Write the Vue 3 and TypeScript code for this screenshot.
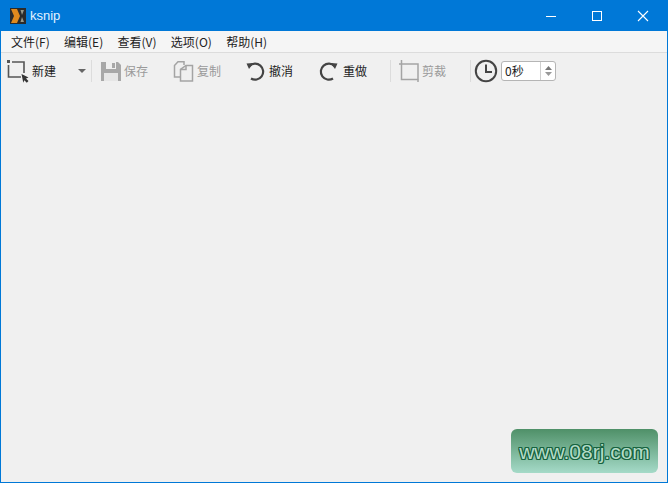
<script setup lang="ts">
const menus: string[] = ['文件(F)', '编辑(E)', '查看(V)', '选项(O)', '帮助(H)']
</script>

<template>
  <div class="window">
    <header class="titlebar">
      <svg class="logo" width="16" height="16" viewBox="0 0 16 16">
        <rect width="16" height="16" fill="#2b2b2b" />
        <path d="M1 1h6l3 7-3 7H1l3-7z" fill="#e08a1e" />
        <path d="M10.500 2h3.500l-2 5zM10.500 14h3.500l-2-5z" fill="#9a9a8a" />
      </svg>
      <span class="title">ksnip</span>
      <div class="controls">
        <svg class="ctl" viewBox="0 0 46 30"><path d="M18 15.500h10" stroke="#fff" stroke-width="1" /></svg>
        <svg class="ctl" viewBox="0 0 46 30"><rect x="18.500" y="10.500" width="9" height="9" fill="none" stroke="#fff" /></svg>
        <svg class="ctl" viewBox="0 0 46 30"><path d="M18 10l10 10M28 10L18 20" stroke="#fff" stroke-width="1.100" /></svg>
      </div>
    </header>

    <nav class="menubar">
      <span v-for="m in menus" :key="m" class="menu">{{ m }}</span>
    </nav>

    <div class="toolbar">
      <div class="tool new">
        <svg width="24" height="24" viewBox="0 0 24 24">
          <path d="M2.500 6V18H15M6 3H18V14" fill="none" stroke="#555" stroke-width="1.600" />
          <path d="M1 1h3v3H1z" fill="#555" />
          <path d="M15.500 15l7 3.500-2.500 1 2.500 2.500-1.700 1.700-2.500-2.500-1 2.500z" fill="#333" />
        </svg>
        <span class="label dark">新建</span>
        <svg class="caret" width="8" height="4" viewBox="0 0 8 4"><path d="M0 0h8L4 4z" fill="#666" /></svg>
      </div>
      <i class="sep first" />
      <div class="tool save">
        <svg width="22" height="22" viewBox="0 0 22 22">
          <path d="M1 2h17l3 3v16H1z" fill="#a8a8a8" />
          <path d="M6 2h10v7H6z" fill="#f0f0f0" />
          <path d="M12 3h3v5h-3z" fill="#a8a8a8" />
          <path d="M4 13h14v8H4z" fill="#e6e6e6" />
        </svg>
        <span class="label">保存</span>
      </div>
      <div class="tool copy">
        <svg width="22" height="22" viewBox="0 0 22 22" fill="none" stroke="#a4a4a4" stroke-width="1.500">
          <path d="M11 5V1.800H5L1.500 5.500V17H7" />
          <path d="M13 5.500H19.500V21H7.500V9.500z" fill="#f0f0f0" />
          <path d="M7.500 9.500H13V5.500" />
        </svg>
        <span class="label">复制</span>
      </div>
      <div class="tool undo">
        <svg width="22" height="22" viewBox="0 0 22 22" fill="none">
          <path d="M4.500 6A8 8 0 1 1 6 18.500" stroke="#444" stroke-width="2.200" />
          <path d="M1.500 3.500L8.500 3 4 9z" fill="#444" />
        </svg>
        <span class="label dark">撤消</span>
      </div>
      <div class="tool redo">
        <svg width="22" height="22" viewBox="0 0 22 22" fill="none">
          <path d="M17.500 6A8 8 0 1 0 16 18.500" stroke="#444" stroke-width="2.200" />
          <path d="M20.500 3.500L13.500 3 18 9z" fill="#444" />
        </svg>
        <span class="label dark">重做</span>
      </div>
      <i class="sep second" />
      <div class="tool crop">
        <svg width="22" height="24" viewBox="0 0 22 24" fill="none" stroke="#a4a4a4" stroke-width="1.500">
          <path d="M3.500 1V20.500H20V5H1" />
          <path d="M20 20.500V23" />
        </svg>
        <span class="label">剪裁</span>
      </div>
      <i class="sep third" />
      <svg class="clock" width="24" height="24" viewBox="0 0 24 24" fill="none" stroke="#444">
        <circle cx="12" cy="12" r="10.200" stroke-width="2" />
        <path d="M12 5.500V13H18" stroke-width="2" />
      </svg>
      <div class="spin">
        <span class="value">0秒</span>
        <span class="arrows">
          <svg width="7" height="4" viewBox="0 0 7 4"><path d="M0 4L3.500 0 7 4z" fill="#777" /></svg>
          <svg width="7" height="4" viewBox="0 0 7 4"><path d="M0 0L3.500 4 7 0z" fill="#999" /></svg>
        </span>
      </div>
    </div>

    <main class="content">
      <div class="stamp">www.08rj.com</div>
    </main>
  </div>
</template>

<style>
html, body { margin: 0; padding: 0; }
</style>

<style scoped>
.window {
  width: 668px;
  height: 483px;
  box-sizing: border-box;
  border: 1px solid #0078d7;
  border-top: 0;
  display: flex;
  flex-direction: column;
  background: #f0f0f0;
  font-family: "Noto Sans CJK SC", "Liberation Sans", sans-serif;
  overflow: hidden;
}
.titlebar {
  height: 31px;
  flex: none;
  background: #0078d7;
  display: flex;
  align-items: center;
  padding-left: 9px;
  color: #fff;
}
.logo { flex: none; }
.title {
  margin-left: 4px;
  font: 13px "Liberation Sans", sans-serif;
  color: #e4f2ff;
}
.controls { margin-left: auto; display: flex; margin-right: 1px; }
.ctl { width: 46px; height: 30px; display: block; }
.menubar {
  height: 21px;
  flex: none;
  background: #f5f5f5;
  border-bottom: 1px solid #dcdcdc;
  display: flex;
  align-items: center;
  padding-left: 10px;
  gap: 14.300px;
}
.menu { font-size: 12px; line-height: 21px; color: #222; }
.toolbar {
  height: 35px;
  flex: none;
  display: flex;
  align-items: center;
  padding-left: 5px;
}
.tool { display: flex; align-items: center; flex: none; }
.label { font-size: 12px; color: #9a9a9a; margin-left: 2px; }
.label.dark { color: #222; }
.caret { margin-left: 22px; }
.sep { width: 1px; height: 22px; background: #dcdcdc; flex: none; }
.sep.first { margin-left: 5px; }
.save { margin-left: 8px; }
.copy { margin-left: 25px; }
.undo { margin-left: 24px; }
.redo { margin-left: 24px; }
.redo .label { margin-left: 4px; }
.sep.second { margin-left: 23px; }
.crop { margin-left: 7px; }
.sep.third { margin-left: 24px; }
.clock { margin-left: 3px; flex: none; }
.spin {
  margin-left: 3px;
  width: 55px;
  height: 20px;
  box-sizing: border-box;
  border: 1px solid #b5b5b5;
  border-radius: 3px;
  background: #fff;
  display: flex;
  align-items: center;
  justify-content: space-between;
  flex: none;
}
.value { font-size: 12px; color: #222; padding-left: 3px; }
.arrows {
  width: 14px;
  height: 100%;
  border-left: 1px solid #cfcfcf;
  display: flex;
  flex-direction: column;
  align-items: center;
  justify-content: center;
  gap: 2px;
}
.arrows svg { display: block; }
.content { flex: 1; position: relative; }
.stamp {
  position: absolute;
  left: 510px;
  top: 341px;
  width: 147px;
  height: 44px;
  border-radius: 6px;
  background: linear-gradient(#4f9068, #a5dac8);
  display: flex;
  align-items: center;
  justify-content: center;
  font: 21px/1 "Liberation Sans", sans-serif;
  color: #b5dcc8;
  text-shadow: -1px 0 #17633f, 1px 0 #17633f, 0 -1px #17633f, 0 1px #17633f, 1px 1px #17633f, -1px -1px #17633f, 1px -1px #17633f, -1px 1px #17633f;
}
</style>
